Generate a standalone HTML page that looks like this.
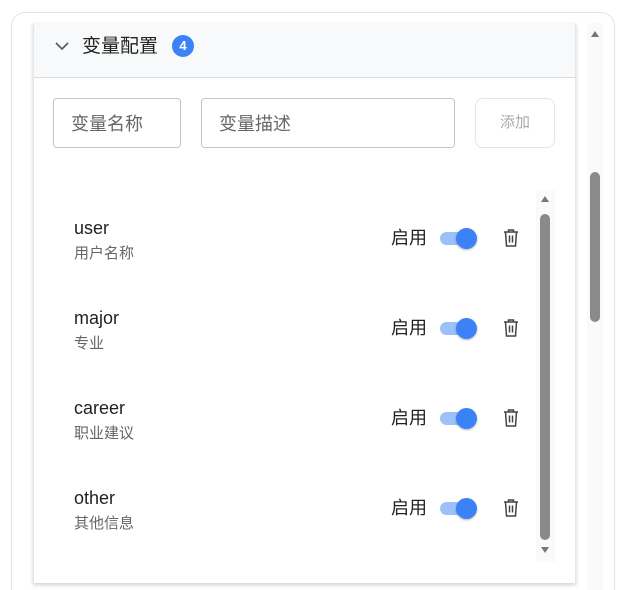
<!DOCTYPE html>
<html><head><meta charset="utf-8"><style>
*{box-sizing:border-box;margin:0;padding:0}
html,body{width:625px;height:590px;overflow:hidden}
body{background:#fff;font-family:"Liberation Sans","Noto Sans CJK SC",sans-serif}
#w{position:relative;width:625px;height:590px;overflow:hidden}
.outer{position:absolute;left:11px;top:12px;width:604px;height:578px;border:1px solid #e3e3e3;border-bottom:none;border-radius:14px 14px 0 0}
.panel{position:absolute;left:33px;top:23px;width:543px;height:560px;background:#fff;box-shadow:0 2px 4px rgba(0,0,0,.18);border-left:1px solid #e6e6e6;border-right:1px solid #e6e6e6}
.head{height:55px;background:#f8f9fa;border-bottom:1px solid #dcdcdc;position:relative}
.head .t{position:absolute;left:48px;top:13px;font-size:19px;line-height:22px;color:#222}
.badge{position:absolute;left:138px;top:12px;width:22px;height:22px;border-radius:50%;background:#3b82f6;color:#fff;font-size:13px;font-weight:bold;text-align:center;line-height:22px}
.in{position:absolute;top:98px;height:50px;border:1px solid #c4c4c4;border-radius:4px;font-size:18px;color:#666;padding-left:17px;line-height:50px}
.btn{position:absolute;left:475px;top:98px;width:80px;height:50px;border:1px solid #e5e5e5;border-radius:8px;color:#aaa;font-size:15px;text-align:center;line-height:48px}
.row{position:absolute;left:74px;width:470px}
.nm{font-size:18px;line-height:20px;color:#222;position:absolute;top:-20px}
.ds{font-size:15px;line-height:20px;color:#666;position:absolute;top:6px}
.en{position:absolute;left:317px;top:-10px;font-size:18px;line-height:20px;color:#222}
.tr{position:absolute;left:366px;top:-6px;width:34px;height:13px;border-radius:7px;background:#9cc0f9}
.kn{position:absolute;left:382px;top:-10px;width:21px;height:21px;border-radius:50%;background:#3b82f6;box-shadow:0 1px 2px rgba(0,0,0,.3)}
.tb{position:absolute;left:429px;top:-10px}
</style></head><body><div id="w">
<div class="outer"></div>
<div style="position:absolute;left:587px;top:23px;width:16px;height:567px;background:#fafafa"></div>
<div style="position:absolute;left:590px;top:172px;width:10px;height:150px;border-radius:5px;background:#8a8a8a"></div>
<div style="position:absolute;left:591px;top:31px;width:0;height:0;border-left:4px solid transparent;border-right:4px solid transparent;border-bottom:6px solid #777"></div>
<div class="panel">
<div class="head">
<svg style="position:absolute;left:20px;top:17px" width="16" height="12" viewBox="0 0 16 12"><path d="M2 3l6 6 6-6" fill="none" stroke="#555" stroke-width="1.6"/></svg>
<div class="t">变量配置</div><div class="badge">4</div></div>
</div>
<div class="in" style="left:53px;width:128px">变量名称</div>
<div class="in" style="left:201px;width:254px">变量描述</div>
<div class="btn">添加</div>
<div style="position:absolute;left:536px;top:190px;width:19px;height:372px;background:#fafafa"></div>
<div style="position:absolute;left:540px;top:214px;width:10px;height:326px;border-radius:5px;background:#8a8a8a"></div>
<div style="position:absolute;left:541px;top:196px;border-left:4px solid transparent;border-right:4px solid transparent;border-bottom:6px solid #777"></div>
<div style="position:absolute;left:541px;top:547px;border-left:4px solid transparent;border-right:4px solid transparent;border-top:6px solid #777"></div>
<div class="row" style="top:238px"><div class="nm">user</div><div class="ds">用户名称</div><div class="en">启用</div><div class="tr"></div><div class="kn"></div><svg class="tb" width="16" height="20" viewBox="0 0 16 20"><path d="M1 4h14M5.5 4V2h5v2M2.5 4l1 14h9l1-14M6.5 7.5v7M9.5 7.5v7" fill="none" stroke="#444" stroke-width="1.5"/></svg></div>
<div class="row" style="top:328px"><div class="nm">major</div><div class="ds">专业</div><div class="en">启用</div><div class="tr"></div><div class="kn"></div><svg class="tb" width="16" height="20" viewBox="0 0 16 20"><path d="M1 4h14M5.5 4V2h5v2M2.5 4l1 14h9l1-14M6.5 7.5v7M9.5 7.5v7" fill="none" stroke="#444" stroke-width="1.5"/></svg></div>
<div class="row" style="top:418px"><div class="nm">career</div><div class="ds">职业建议</div><div class="en">启用</div><div class="tr"></div><div class="kn"></div><svg class="tb" width="16" height="20" viewBox="0 0 16 20"><path d="M1 4h14M5.5 4V2h5v2M2.5 4l1 14h9l1-14M6.5 7.5v7M9.5 7.5v7" fill="none" stroke="#444" stroke-width="1.5"/></svg></div>
<div class="row" style="top:508px"><div class="nm">other</div><div class="ds">其他信息</div><div class="en">启用</div><div class="tr"></div><div class="kn"></div><svg class="tb" width="16" height="20" viewBox="0 0 16 20"><path d="M1 4h14M5.5 4V2h5v2M2.5 4l1 14h9l1-14M6.5 7.5v7M9.5 7.5v7" fill="none" stroke="#444" stroke-width="1.5"/></svg></div>
</div></body></html>
